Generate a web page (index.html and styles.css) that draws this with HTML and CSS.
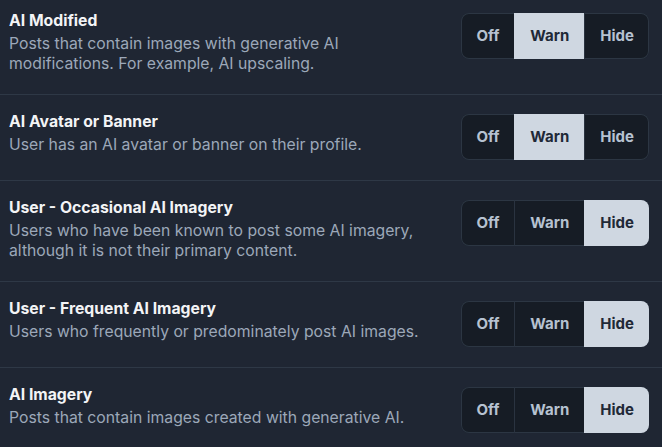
FILE: index.html
```html
<!DOCTYPE html>
<html lang="en">
<head>
<meta charset="utf-8">
<title>Content filters</title>
<link rel="stylesheet" href="styles.css">
</head>
<body>
<div class="list">
  <div class="row first">
    <div class="text">
      <div class="title">AI Modified</div>
      <div class="desc">Posts that contain images with generative AI modifications. For example, AI upscaling.</div>
    </div>
    <div class="seg">
      <span class="opt">Off</span><span class="opt active">Warn</span><span class="opt">Hide</span>
    </div>
  </div>
  <div class="row">
    <div class="text">
      <div class="title">AI Avatar or Banner</div>
      <div class="desc">User has an AI avatar or banner on their profile.</div>
    </div>
    <div class="seg">
      <span class="opt">Off</span><span class="opt active">Warn</span><span class="opt">Hide</span>
    </div>
  </div>
  <div class="row">
    <div class="text">
      <div class="title">User - Occasional AI Imagery</div>
      <div class="desc">Users who have been known to post some AI imagery, although it is not their primary content.</div>
    </div>
    <div class="seg">
      <span class="opt">Off</span><span class="opt">Warn</span><span class="opt active">Hide</span>
    </div>
  </div>
  <div class="row">
    <div class="text">
      <div class="title">User - Frequent AI Imagery</div>
      <div class="desc">Users who frequently or predominately post AI images.</div>
    </div>
    <div class="seg">
      <span class="opt">Off</span><span class="opt">Warn</span><span class="opt active">Hide</span>
    </div>
  </div>
  <div class="row">
    <div class="text">
      <div class="title">AI Imagery</div>
      <div class="desc">Posts that contain images created with generative AI.</div>
    </div>
    <div class="seg">
      <span class="opt">Off</span><span class="opt">Warn</span><span class="opt active">Hide</span>
    </div>
  </div>
</div>
</body>
</html>
```
FILE: styles.css
```css
html, body {
  margin: 0;
  padding: 0;
  background: #1f2633;
}
body {
  font-family: Inter, "Noto Sans", sans-serif;
  font-size: 15.75px;
  width: 662px;
  height: 447px;
  overflow: hidden;
}
.list {
  display: flex;
  flex-direction: column;
}
.row {
  display: flex;
  align-items: flex-start;
  gap: 24px;
  padding: 18px 13px 20px 9px;
  border-top: 1px solid #2e3846;
}
.row.first {
  border-top: none;
  padding-top: 12px;
}
.text {
  flex: 1;
  min-width: 0;
}
.title {
  color: #f3f4f6;
  font-weight: 700;
  line-height: 18px;
  margin-bottom: 4px;
}
.desc {
  color: #9ca8b9;
  line-height: 20px;
}
.seg {
  flex: none;
  display: flex;
  height: 46px;
  margin-top: 1px;
  border-radius: 8px;
  overflow: hidden;
  background: #161c25;
  box-shadow: inset 0 0 0 1px #2c3643;
}
.opt {
  padding: 0 15px;
  line-height: 46px;
  font-size: 15px;
  font-weight: 700;
  color: #b6c2d1;
}
.opt + .opt {
  border-left: 1px solid #2a3340;
}
.opt.active {
  background: #cfd7e1;
  color: #1f2937;
  border-left-color: #cfd7e1;
}
```
